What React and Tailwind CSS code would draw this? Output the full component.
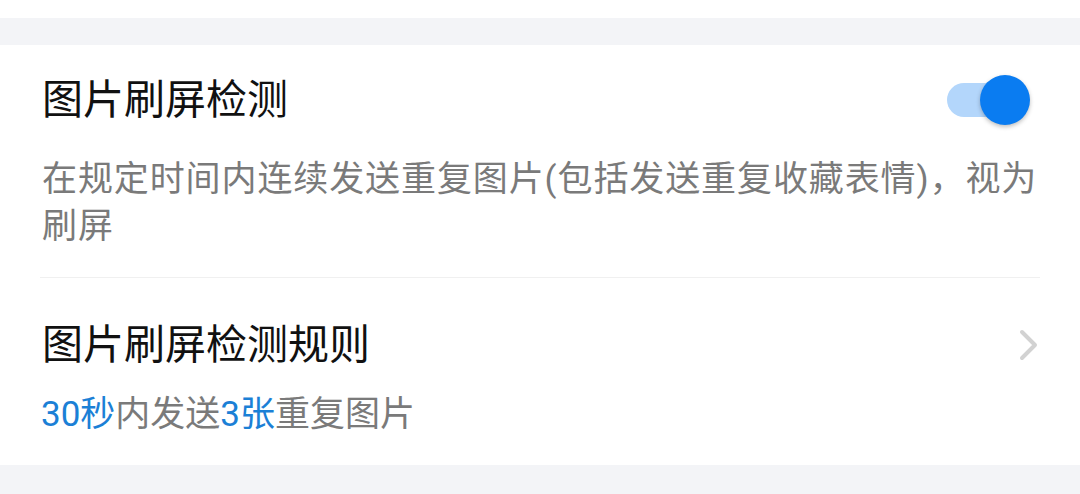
import { useState } from 'react';

const fuente = { fontFamily: "Roboto, 'Noto Sans CJK SC', 'Noto Sans', sans-serif" };

function Interruptor({ activo, onCambiar }) {
  return (
    <button
      onClick={onCambiar}
      className="relative w-[83px] h-[50px] mr-[10px] shrink-0"
    >
      <span
        className={`absolute left-0 top-[8px] w-[74px] h-[34px] rounded-full ${
          activo ? 'bg-[#b3d6fb]' : 'bg-[#d9d9d9]'
        }`}
      />
      <span
        className={`absolute top-0 w-[50px] h-[50px] rounded-full shadow-[0_2px_4px_rgba(0,0,0,0.25)] ${
          activo ? 'right-0 bg-[#0a7cf1]' : 'left-0 bg-[#fafafa]'
        }`}
      />
    </button>
  );
}

export default function App() {
  const [deteccion, setDeteccion] = useState(true);

  return (
    <div className="w-[1080px] h-[494px] bg-[#f3f4f7] overflow-hidden" style={fuente}>
      {/* Franja superior */}
      <div className="h-[18px] bg-white" />
      <div className="h-[27px]" />

      {/* Tarjeta */}
      <div className="bg-white px-[40px]">
        <div className="pt-[27px] pb-[27px] border-b border-[#f0f0f0]">
          <div className="h-[56px] flex items-center justify-between">
            <span className="text-[41px] leading-[56px] text-[#111111] pl-[2px]">图片刷屏检测</span>
            <Interruptor activo={deteccion} onCambiar={() => setDeteccion(!deteccion)} />
          </div>
          <p className="mt-[28px] text-[35px] leading-[47px] tracking-[0.9px] text-[#7a7a7a] pl-[2px]">
            在规定时间内连续发送重复图片(包括发送重复收藏表情)，视为刷屏
          </p>
        </div>

        <div className="pt-[39px] pb-[27px]">
          <div className="h-[56px] flex items-center justify-between">
            <span className="text-[41px] leading-[56px] text-[#111111] pl-[2px]">图片刷屏检测规则</span>
            <svg width="20" height="32" viewBox="0 0 20 32" className="mr-[1px]">
              <path
                d="M3 3 L16 16 L3 29"
                fill="none"
                stroke="#d2d2d2"
                strokeWidth="4"
                strokeLinecap="round"
                strokeLinejoin="round"
              />
            </svg>
          </div>
          <p className="mt-[18px] text-[35px] leading-[47px] text-[#7a7a7a] pl-[1px]">
            <span className="text-[#1b80d6]">30秒</span>内发送<span className="text-[#1b80d6]">3张</span>重复图片
          </p>
        </div>
      </div>
    </div>
  );
}
